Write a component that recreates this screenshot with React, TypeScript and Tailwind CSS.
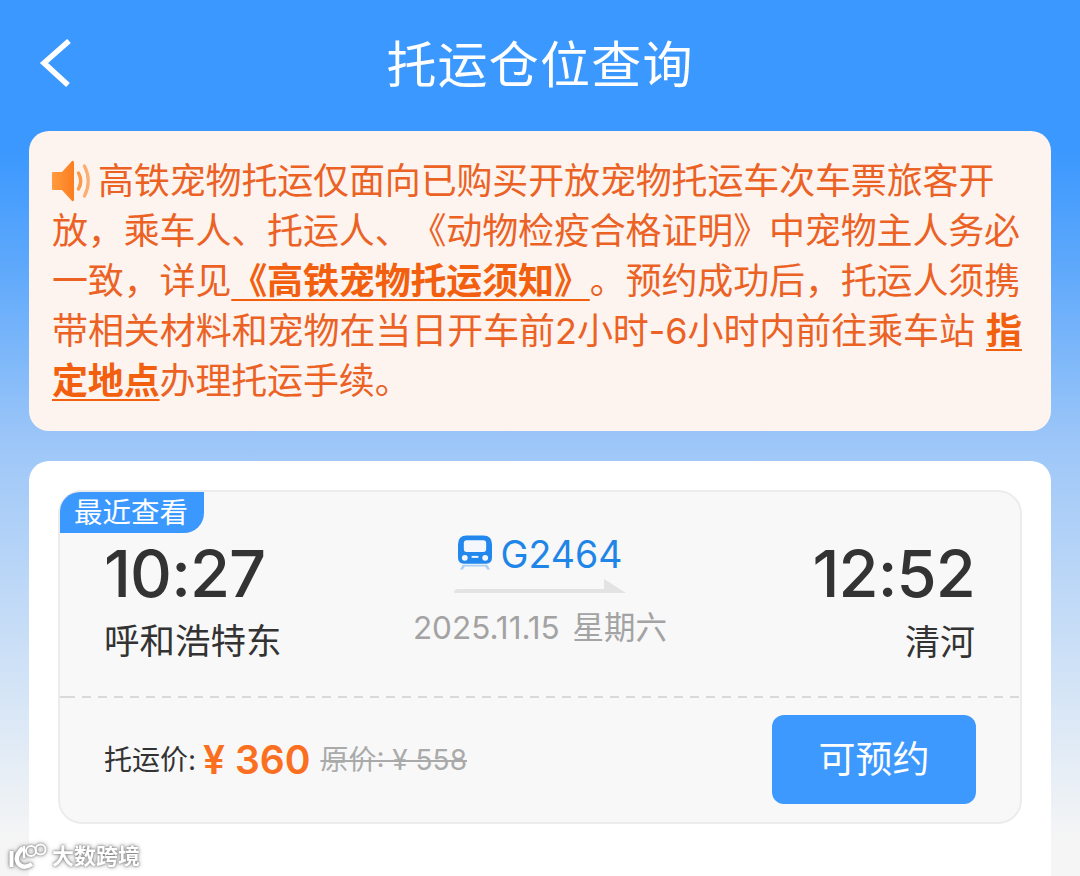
import React from "react";

const cjk = "font-['Inter','Noto_Sans_CJK_SC',sans-serif]";

function Speaker() {
  return (
    <svg width="40" height="42" viewBox="0 0 40 42" className="inline-block align-[-8px] mr-[6px]">
      <defs>
        <linearGradient id="sp" x1="0" y1="0" x2="1" y2="0">
          <stop offset="0" stopColor="#ff9c3e" />
          <stop offset="1" stopColor="#fb7d20" />
        </linearGradient>
      </defs>
      <path d="M1 12 H10 L20 1 Q22 0 22 3 V39 Q22 42 20 41 L10 30 H1 Q0 30 0 29 V13 Q0 12 1 12 Z" fill="url(#sp)" />
      <path d="M26.5 13 Q31 21 26.5 29" fill="none" stroke="#fd9a48" strokeWidth="3.4" strokeLinecap="round" />
      <path d="M32.5 6 Q40 21 32.5 36" fill="none" stroke="#fdae6e" strokeWidth="3.2" strokeLinecap="round" />
    </svg>
  );
}

function TrainIcon() {
  return (
    <svg width="34" height="36" viewBox="0 0 35 36" className="shrink-0 -mt-[2px]">
      <path d="M9 0 H26 Q35 0 35 9 V23 Q35 29 29 29 H6 Q0 29 0 23 V9 Q0 0 9 0 Z" fill="#2288ee" />
      <path d="M9 5 H26 Q29 5 29 8 V14 Q29 17 26 17 H9 Q6 17 6 14 V8 Q6 5 9 5 Z" fill="#f4f8fc" />
      <circle cx="7" cy="23" r="3" fill="#f4f8fc" />
      <circle cx="28" cy="23" r="3" fill="#f4f8fc" />
      <rect x="14" y="21" width="7" height="2" fill="#f4f8fc" />
      <path d="M5 30 H30 L33 35 H30 L28 32 H7 L5 35 H2 Z" fill="#a9d0f5" />
    </svg>
  );
}

function Arrow() {
  return (
    <svg width="172" height="16" viewBox="0 0 172 16" className="block">
      <path d="M0 15 Q0 11 4 11 H150 V1 L172 15 Z" fill="#e3e3e3" />
    </svg>
  );
}

export default function App() {
  const em = "font-bold underline underline-offset-[5px] decoration-2 text-[#f2600f]";
  return (
    <div className={`${cjk} w-[1080px] h-[876px] overflow-hidden relative [text-spacing-trim:space-all] bg-[linear-gradient(180deg,#3b98fe_0px,#3b98fe_150px,#5fa9fb_270px,#9cc6f8_440px,#dbe8f6_720px,#f5f5f5_840px)]`}>
      <header className="relative h-[131px] flex items-center justify-center">
        <svg width="34" height="48" viewBox="0 0 34 48" className="absolute left-[39px] top-[39px]">
          <path d="M30 2 L5 24 L29 46" fill="none" stroke="#ffffff" strokeWidth="5.5" />
        </svg>
        <h1 className="text-[50px] leading-none text-white mb-[1px] tracking-[1.2px] font-normal">托运仓位查询</h1>
      </header>

      <section className="mx-[29px] h-[300px] rounded-[20px] bg-[#fdf4f0] pl-[23px] pt-[25px] text-[36px] leading-[50px] tracking-[-0.15px] text-[#eb6224] whitespace-nowrap">
        <Speaker />高铁宠物托运仅面向已购买开放宠物托运车次车票旅客开<br />
        放，乘车人、托运人、《动物检疫合格证明》中宠物主人务必<br />
        一致，详见<span className={em}>《高铁宠物托运须知》</span>。预约成功后，托运人须携<br />
        <span className="tracking-[-0.07px]">带相关材料和宠物在当日开车前2小时-6小时内前往乘车站 <span className={`${em} ml-[1px]`}>指</span></span><br />
        <span className={em}>定地点</span>办理托运手续。
      </section>

      <section className="mx-[29px] mt-[30px] h-[500px] rounded-t-[20px] bg-white px-[29px] pt-[29px]">
        <div className="relative h-[334px] rounded-[24px] border-2 border-[#ececec] bg-[#f8f8f8]">
          <div className="absolute left-0 top-0 w-[144px] h-[41px] rounded-tl-[20px] rounded-br-[20px] bg-[#3b98fe] text-white text-[28.5px] leading-[41px] pl-[14px]">
            最近查看
          </div>
          <div className="h-[204px] flex justify-between pl-[44px] pr-[45px] pt-[42px]">
            <div className="w-[250px]">
              <div className="text-[65px] leading-[80px] font-medium text-[#333333] tracking-[-0.9px]">10:27</div>
              <div className="text-[35.5px] leading-[46px] mt-[5px] text-[#333333]">呼和浩特东</div>
            </div>
            <div className="flex flex-col items-center -mt-[2px] ml-[1px]">
              <div className="flex items-center gap-[9px] h-[44px] text-[37.5px] text-[#1f86e8]">
                <TrainIcon />
                <span className="mt-[2px]">G2464</span>
              </div>
              <div className="mt-[2px]"><Arrow /></div>
              <div className="mt-[12px] text-[31.5px] leading-[44px] text-[#a3a3a3] whitespace-pre [word-spacing:4px]">2025.11.15 星期六</div>
            </div>
            <div className="w-[250px] text-right">
              <div className="text-[65px] leading-[80px] font-medium text-[#333333] tracking-[-0.9px]">12:52</div>
              <div className="text-[35px] leading-[46px] mt-[5px] text-[#333333]">清河</div>
            </div>
          </div>
          <div className="h-[2px] bg-[linear-gradient(90deg,#d9d9d9_0,#d9d9d9_6px,transparent_6px),repeating-linear-gradient(90deg,transparent_0,transparent_6px,#d9d9d9_6px,#d9d9d9_15px,transparent_15px,transparent_16px)]"></div>
          <div className="flex items-center justify-between pl-[44px] pr-[44px] pt-[17px]">
            <div className="flex items-center">
              <span className="text-[28px] text-[#333333]">托运价:</span>
              <span className="ml-[7px] text-[39px] font-semibold text-[#fb6f20] leading-none">¥ 360</span>
              <span className="ml-[10px] text-[28px] text-[#aaaaaa] line-through">原价: ¥ 558</span>
            </div>
            <button className="w-[204px] h-[89px] rounded-[12px] bg-[#3d99fd] text-white text-[37px]">可预约</button>
          </div>
        </div>
      </section>

      <div className="absolute left-[9px] top-[842px] flex items-center gap-[5px] text-[22px] leading-[28px] font-bold text-white [filter:drop-shadow(0_0_1px_#777777)_drop-shadow(0_0_2px_#aaaaaa)]">
        <svg width="38" height="27" viewBox="0 0 38 27">
          <path d="M2.5 8 V24" fill="none" stroke="#ffffff" strokeWidth="4" />
          <path d="M14 5 Q5 13 9 20 Q14 27 23 21" fill="none" stroke="#ffffff" strokeWidth="4.5" />
          <path d="M15 15 V3" fill="none" stroke="#ffffff" strokeWidth="2.5" />
          <circle cx="22" cy="8" r="5" fill="none" stroke="#ffffff" strokeWidth="2" />
          <circle cx="31.5" cy="6.5" r="5" fill="none" stroke="#ffffff" strokeWidth="2" />
        </svg>
        <span>大数跨境</span>
      </div>
    </div>
  );
}
